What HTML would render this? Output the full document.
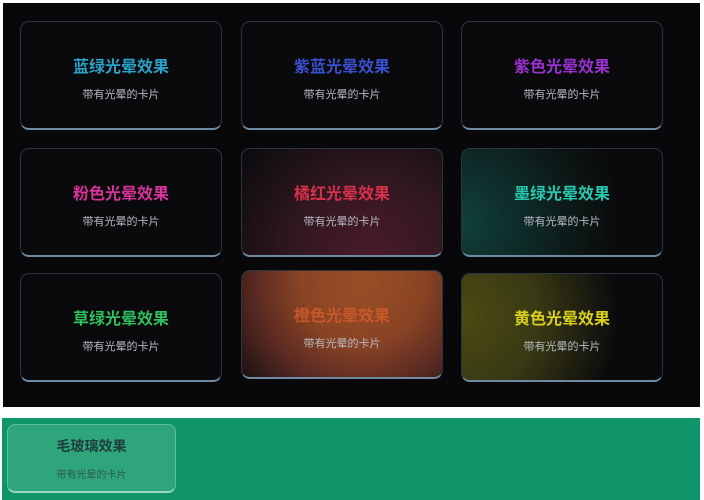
<!DOCTYPE html>
<html><head><meta charset="utf-8"><style>
body{margin:0;width:704px;height:500px;background:#fff;position:relative;overflow:hidden;font-family:"Liberation Sans","Noto Sans CJK SC",sans-serif}
.dark{position:absolute;left:3px;top:3px;width:697px;height:404px;background:#08080a}
.c{position:absolute;width:202px;height:109px;border:1px solid #2c3540;border-bottom:2px solid #6f8aa3;border-radius:9px;background:#0a0a0c;overflow:hidden;text-align:center;box-sizing:border-box}
.c h{display:block;position:absolute;left:0;right:0;top:31px;font-size:16px;font-weight:bold}
.c p{position:absolute;left:0;right:0;top:64px;margin:0;font-size:11px;color:#b4b9c0}
.green{position:absolute;left:2px;top:418px;width:698px;height:82px;background:#10956a}
.glass{position:absolute;left:7px;top:424px;width:169px;height:69px;border-radius:8px;background:#2fa57c;border:1px solid #5fbf9d;border-bottom:2px solid #9ad6c3;box-sizing:border-box;text-align:center}
</style></head><body>
<div class="dark"></div>
<div class="c" style="left:20px;top:21px"><h style="color:#2aa3c8">蓝绿光晕效果</h><p>带有光晕的卡片</p></div>
<div class="c" style="left:241px;top:21px"><h style="color:#3a50d0">紫蓝光晕效果</h><p>带有光晕的卡片</p></div>
<div class="c" style="left:461px;top:21px"><h style="color:#9a30d0">紫色光晕效果</h><p>带有光晕的卡片</p></div>
<div class="c" style="left:20px;top:148px"><h style="color:#d8339a">粉色光晕效果</h><p>带有光晕的卡片</p></div>
<div class="c" style="left:241px;top:148px;background:radial-gradient(circle at 65% 100%,#4a1a2a 0,#321820 45%,#181014 80%,#0a0a0c 100%)"><h style="color:#d8304a">橘红光晕效果</h><p>带有光晕的卡片</p></div>
<div class="c" style="left:461px;top:148px;background:radial-gradient(circle at 0% 70%,#10403a 0,#0e2624 35%,#0c1615 55%,#0a0a0c 75%)"><h style="color:#2ac8b0">墨绿光晕效果</h><p>带有光晕的卡片</p></div>
<div class="c" style="left:20px;top:273px"><h style="color:#2fc060">草绿光晕效果</h><p>带有光晕的卡片</p></div>
<div class="c" style="left:241px;top:270px;background:radial-gradient(circle at 60% 10%,#9a4e26 0,#8a4424 40%,#5a2a22 70%,#1a1012 100%)"><h style="color:#c8582a">橙色光晕效果</h><p>带有光晕的卡片</p></div>
<div class="c" style="left:461px;top:273px;background:radial-gradient(circle at 0% 40%,#4a4a12 0,#3a3a14 35%,#1c1c10 60%,#0a0a0c 75%)"><h style="color:#d8d020">黄色光晕效果</h><p>带有光晕的卡片</p></div>
<div class="green"></div>
<div class="glass"><div style="margin-top:11px;font-size:14px;font-weight:bold;color:#1e3d3a">毛玻璃效果</div><div style="margin-top:10px;font-size:10px;color:#2e5a50">带有光晕的卡片</div></div>
</body></html>
